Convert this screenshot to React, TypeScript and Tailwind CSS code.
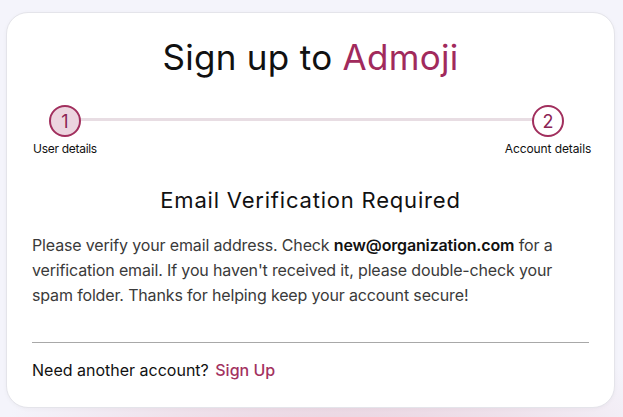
import React from 'react';

const App: React.FC = () => {
  return (
    <div
      className="h-[417px] w-[623px] overflow-hidden bg-[#f4f4fb] pt-[12px] pl-[6px] pr-[8px]"
      style={{ background: 'radial-gradient(ellipse 70% 45% at 55% 110%, #e9cfdc 0%, #efe2ec 45%, #f4f4fb 80%)' }}
    >
      <div className="h-[396px] rounded-[22px] border border-[#e4e4ea] bg-white px-[25px] font-['Inter',sans-serif] shadow-[0_1px_4px_rgba(0,0,0,0.04)]">
        <h1 className="pt-[22px] text-center text-[35px] leading-[44px] tracking-[0.3px] text-[#111]">
          Sign up to <span className="text-[#a12a5c]">Admoji</span>
        </h1>

        <div className="relative mt-[26px] flex items-start justify-between">
          <div className="absolute left-[32px] right-[32px] top-[13px] h-[3px] bg-[#e8dde3]" />
          <div className="relative flex w-[66px] flex-col items-center">
            <div className="flex h-[32px] w-[32px] items-center justify-center rounded-full border-2 border-[#a12f5d] bg-[#ecd5df] text-[18px] text-[#8b2455]">
              1
            </div>
            <span className="mt-[5px] whitespace-nowrap text-[12px] leading-[14px] tracking-[-0.3px] text-[#111]">User details</span>
          </div>
          <div className="relative -mr-[4px] flex w-[90px] flex-col items-center">
            <div className="flex h-[32px] w-[32px] items-center justify-center rounded-full border-2 border-[#a12f5d] bg-white text-[18px] text-[#8b2455]">
              2
            </div>
            <span className="mt-[5px] whitespace-nowrap text-[12px] leading-[14px] tracking-[-0.1px] text-[#111]">Account details</span>
          </div>
        </div>

        <h2 className="mt-[30px] text-center text-[22px] leading-[28px] tracking-[0.8px] text-[#111]">Email Verification Required</h2>

        <p className="mt-[19px] text-[16px] leading-[25px] tracking-[-0.15px] text-[#3a3a3a]">
          Please verify your email address. Check <span className="font-semibold text-[#111]">new@organization.com</span> for a
          verification email. If you haven't received it, please double-check your spam folder. Thanks for helping keep your
          account secure!
        </p>

        <div className="mt-[34px] h-px bg-[#a8a8a8]" />

        <p className="mt-[15px] text-[16px] leading-[24px] text-[#111]">
          Need another account? <a href="#" className="ml-[2px] font-medium text-[#a3325f]">Sign Up</a>
        </p>
      </div>
    </div>
  );
};

export default App;
